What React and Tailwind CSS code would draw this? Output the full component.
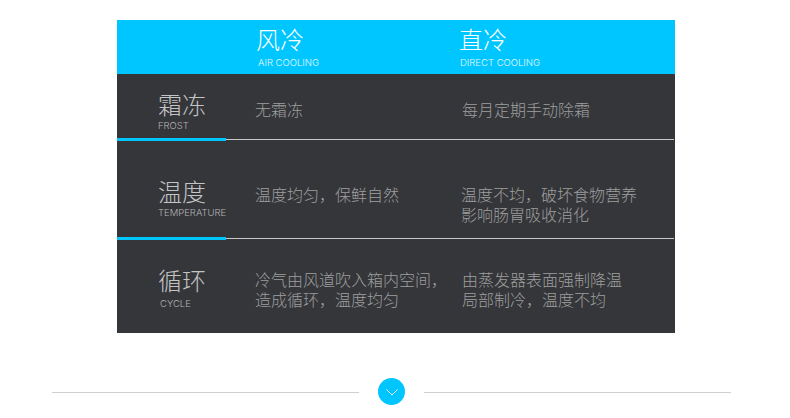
const cjk = { fontFamily: '"Noto Sans CJK SC", sans-serif' };

function Divider() {
  return (
    <div className="flex items-center h-[3px]">
      <div className="w-[109px] h-[3px] bg-[#00c6ff]" />
      <div className="flex-1 h-px bg-[#c9c9c9] mr-px" />
    </div>
  );
}

function Row({ height, title, en, enClass, a, b, titleClass, aClass, bClass }) {
  return (
    <div className="flex" style={{ height }}>
      <div className={`w-[138px] shrink-0 pl-10 ${titleClass}`}>
        <div className="text-[24px] leading-[32px] font-light text-[#c4c4c4] pl-px">{title}</div>
        <div className={`text-[9.5px] leading-[12px] font-light text-[#b4b4b4] font-['Inter',sans-serif] ${enClass}`}>{en}</div>
      </div>
      <div className={`w-[206px] shrink-0 text-[16px] leading-[20px] font-light text-[#9e9e9e] ${aClass}`}>
        {a.map((t) => <div key={t} className="whitespace-nowrap">{t}</div>)}
      </div>
      <div className={`flex-1 text-[16px] leading-[20px] font-light text-[#9e9e9e] ${bClass}`}>
        {b.map((t) => <div key={t} className="whitespace-nowrap">{t}</div>)}
      </div>
    </div>
  );
}

export default function App() {
  return (
    <div className="w-[790px] h-[418px] bg-white overflow-hidden pt-5" style={cjk}>
      <div className="w-[558px] ml-[117px] bg-[#35363a]">
        <div className="flex h-[54px] bg-[#00c6ff] text-white">
          <div className="w-[140px] shrink-0" />
          <div className="w-[203px] shrink-0 pt-[3px]">
            <div className="text-[24px] leading-[32px] font-light -ml-px">风冷</div>
            <div className="text-[9.5px] leading-[12px] font-light mt-[2px] pl-px text-[#e4f8ff] font-['Inter',sans-serif]">AIR COOLING</div>
          </div>
          <div className="flex-1 pt-[3px]">
            <div className="text-[24px] leading-[32px] font-light -ml-px">直冷</div>
            <div className="text-[9.5px] leading-[12px] font-light mt-[2px] text-[#e4f8ff] font-['Inter',sans-serif]">DIRECT COOLING</div>
          </div>
        </div>
        <Row height={64} title="霜冻" en="FROST" enClass="pl-px" titleClass="pt-[14px] pl-[40px]" aClass="pt-[25px]" bClass="pt-[25px] pl-[1px]" a={['无霜冻']} b={['每月定期手动除霜']} />
        <Divider />
        <Row height={96} title="温度" en="TEMPERATURE" enClass="pl-px" titleClass="pt-[34px]" aClass="pt-[43px]" bClass="pt-[43px]" a={['温度均匀，保鲜自然']} b={['温度不均，破坏食物营养', '影响肠胃吸收消化']} />
        <Divider />
        <Row height={93} title="循环" en="CYCLE" enClass="pl-[3px] mt-[2px]" titleClass="pt-[24px]" aClass="pt-[29px]" bClass="pt-[29px] pl-[1px]" a={['冷气由风道吹入箱内空间，', '造成循环，温度均匀']} b={['由蒸发器表面强制降温', '局部制冷，温度不均']} />
      </div>
      <div className="flex items-center ml-[52px] w-[679px] mt-[45px]">
        <div className="flex-1 h-px mt-[2px] bg-[#cfcfcf]" />
        <div className="w-[27px] h-[27px] mx-[19px] rounded-full bg-[#00c6ff] flex items-center justify-center">
          <svg className="ml-px mt-px" width="12" height="7" viewBox="0 0 12 7" fill="none" stroke="white" strokeWidth="1">
            <path d="M.5.5 6 6 11.5.5" />
          </svg>
        </div>
        <div className="flex-1 h-px mt-[2px] bg-[#cfcfcf]" />
      </div>
    </div>
  );
}
